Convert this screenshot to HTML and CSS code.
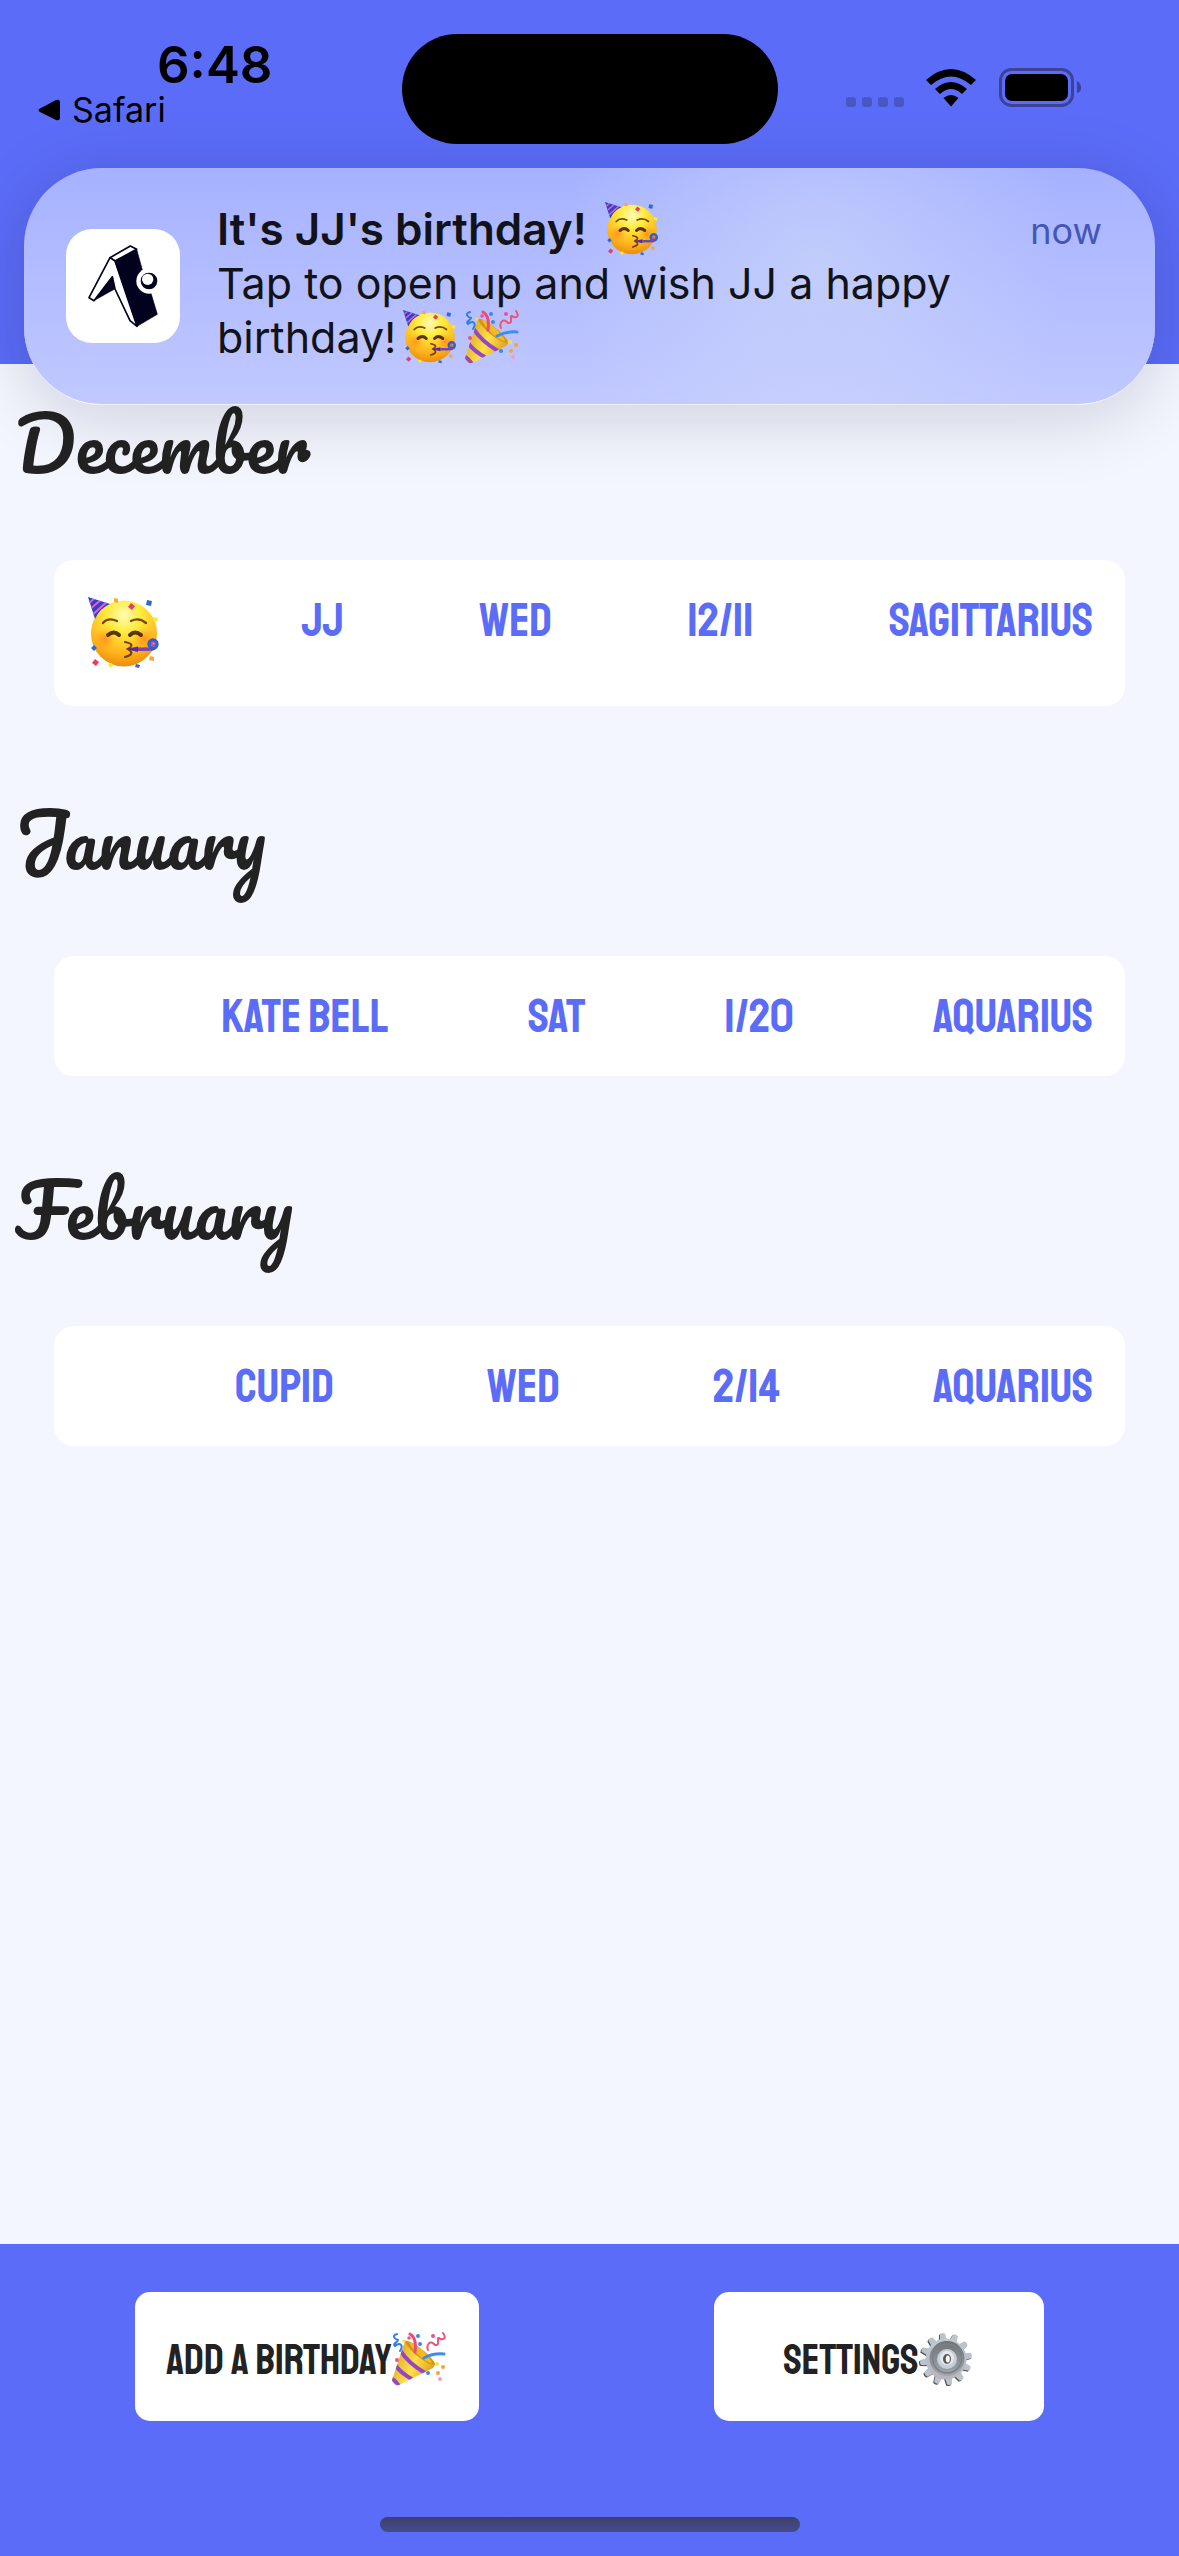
FILE: index.html
```html
<!DOCTYPE html>
<html lang="en">
<head>
<meta charset="utf-8">
<meta name="viewport" content="width=device-width, initial-scale=1">
<title>Birthdays</title>
<link rel="stylesheet" href="styles.css">
</head>
<body>
<svg class="sprite" aria-hidden="true">
  <defs>
    <radialGradient id="skin" cx="50%" cy="22%" r="80%">
      <stop offset="0" stop-color="#fffbb8"/><stop offset=".32" stop-color="#ffec3d"/><stop offset=".72" stop-color="#ffb51c"/><stop offset="1" stop-color="#e98a0b"/>
    </radialGradient>
    <radialGradient id="blush"><stop offset="0" stop-color="#ff7a1a" stop-opacity=".65"/><stop offset="1" stop-color="#ff8a1a" stop-opacity="0"/></radialGradient>
    <linearGradient id="cone" x1="0" y1=".3" x2="1" y2=".8">
      <stop offset="0" stop-color="#d9a21c"/><stop offset=".5" stop-color="#ffe04a"/><stop offset="1" stop-color="#d8920f"/>
    </linearGradient>
    <linearGradient id="steel" x1="0" y1="0" x2="0" y2="1"><stop offset="0" stop-color="#bccbd5"/><stop offset="1" stop-color="#b9b3bd"/></linearGradient>
    <linearGradient id="dish" x1="0" y1="0" x2="0" y2="1"><stop offset="0" stop-color="#6d7377"/><stop offset="1" stop-color="#a1a8ae"/></linearGradient>
    <clipPath id="coneClip"><path d="M13 9 43 32Q43 35 39 37L7 53Q1 54 0 48Z"/></clipPath>
    <clipPath id="hatClip"><path d="M0 0 22 7Q12 11 7 22Z"/></clipPath>
    <path id="tooth" d="M23 11 24.500 1.500Q27 0 29.500 1.500L31 11Z"/>
    <g id="quad"><use href="#tooth"/><use href="#tooth" transform="rotate(30 27 27)"/><use href="#tooth" transform="rotate(60 27 27)"/></g>
    <g id="cogs"><use href="#quad"/><use href="#quad" transform="rotate(90 27 27)"/><use href="#quad" transform="rotate(180 27 27)"/><use href="#quad" transform="rotate(270 27 27)"/></g>
  </defs>
  <symbol id="party-face" viewBox="0 0 72 72">
    <circle cx="36" cy="36.500" r="33" fill="url(#skin)"/>
    <circle cx="17" cy="42" r="11" fill="url(#blush)"/><circle cx="56" cy="42" r="11" fill="url(#blush)"/>
    <path d="M0 0 22 7Q12 11 7 22Z" fill="#2747c9"/>
    <g clip-path="url(#hatClip)" stroke="#f455c8" stroke-width="2" fill="none"><path d="M0 7 8 0M1 13 15 1M2 20 21 3"/></g>
    <path d="M15 26Q20 20 29 24M43 24Q51 20 58 26" fill="none" stroke="#7a4700" stroke-width="2.400" stroke-linecap="round"/>
    <path d="M20 38Q26 33 31 38M42 38Q47 33 53 38" fill="none" stroke="#5c3300" stroke-width="4" stroke-linecap="round"/>
    <path d="M37 45Q48 47 40 52Q48 57 37 60" fill="none" stroke="#7a4100" stroke-width="2.200" stroke-linecap="round"/>
    <path d="M38 52 50 49.500V55Z" fill="#4b2bb5"/>
    <path d="M50 52.300 64 52Q69 51 69 47A4 4 0 1 0 65 51" fill="none" stroke="#2c60d3" stroke-width="3.400"/>
    <path d="M50 52.300 64 52" stroke="#b52c95" stroke-width="3" stroke-dasharray="3 3"/>
    <circle cx="65.500" cy="46.500" r="1.800" fill="none" stroke="#c53c9c" stroke-width="1.400"/>
    <g fill="#2b68d8"><path d="m59 3 5 1-1 5-5-1zM6 48l3 3-3 3-3-3zM48 67l4 1-1 3-4-1z"/></g>
    <g fill="#e83e63"><path d="m43 6 4 3-3 4-4-3zM7 62l4 3-3 4-4-3z"/></g>
    <g fill="#ffa33a"><path d="m26 1 4 1v4l-4-1zM62 59l4 1v4l-5-1z"/></g>
    <g fill="#fce83c"><path d="m65 20 5 1-1 4-4-1zM20 67l4-1 1 3-3 2z"/></g>
  </symbol>
  <symbol id="popper" viewBox="0 0 54 54">
    <path d="M13 9 43 32Q43 35 39 37L7 53Q1 54 0 48Z" fill="url(#cone)"/>
    <g clip-path="url(#coneClip)" fill="none" stroke="#9446c9" stroke-width="4"><path d="M8 18Q16 31 33 41M3 33Q10 42 20 47M-1 46Q4 49 8 55"/></g>
    <path d="M13 9C19 7 42 26 43 32C37 36 14 16 13 9Z" fill="#d69412"/>
    <path d="M17 10C24 11 38 24 40 31C34 31 21 20 17 10Z" fill="#f0bb25"/>
    <g fill="none" stroke-width="3" stroke-linecap="round">
      <path d="M18 2Q25 6 23 20" stroke="#f04a70"/>
      <path d="M32 26Q41 21 52 22" stroke="#3f8cf0"/>
      <path d="M5 2C-1 4 3 7 6 8C5 11 0 12 3 14C8 10 12 13 8 19" stroke="#2f7de8" stroke-width="2"/>
      <path d="M51 1C56 8 49 8 47 6C44 5 49 14 43 13C38 7 34 13 36 18" stroke="#ee5478" stroke-width="2"/>
    </g>
    <g fill="#3f86ea"><circle cx="26" cy="4" r="2"/><circle cx="28" cy="12" r="2"/><circle cx="36" cy="41" r="2"/></g>
    <g fill="#f0508b"><circle cx="17" cy="6" r="1.800"/><circle cx="41" cy="4" r="2"/><circle cx="5" cy="28" r="2"/></g>
    <g fill="#f6a237"><circle cx="51" cy="35" r="2"/><circle cx="46" cy="41" r="2"/></g>
    <circle cx="12" cy="9" r="1.500" fill="#f8e03c"/><circle cx="45" cy="32" r="2" fill="#f8e03c"/><circle cx="48" cy="47" r="2" fill="#f09ad0"/>
  </symbol>
  <symbol id="gear" viewBox="0 0 54 54">
    <g transform="translate(-1 1) rotate(-8 27 27)"><use href="#cogs" fill="#55514f"/></g>
    <g transform="rotate(-8 27 27)"><use href="#cogs" fill="#b9c4cd"/></g>
    <circle cx="27" cy="27" r="20.500" fill="url(#steel)"/>
    <circle cx="28" cy="26.500" r="17.500" fill="url(#dish)"/>
    <circle cx="28" cy="26.500" r="14.500" fill="none" stroke="#7b8186" stroke-width="1.500"/>
    <circle cx="28" cy="27" r="10" fill="#c6cfd6"/><circle cx="28" cy="26" r="7" fill="#e2e8ec"/>
    <ellipse cx="28" cy="27" rx="4" ry="5" fill="#5f5955"/><ellipse cx="28.800" cy="27" rx="2" ry="3.500" fill="#fff"/>
  </symbol>
</svg>

<header class="topbar">
  <div class="status">
    <div class="status-left">
      <time class="clock">6:48</time>
      <a class="back" href="#">
        <svg class="back-arrow" viewBox="0 0 22 22" aria-hidden="true"><path d="M2 9.500 18 1Q22 0 22 3V19Q22 22 18 21L2 13Q-1 11 2 9.500Z"/></svg>
        Safari
      </a>
    </div>
    <div class="island"></div>
    <div class="status-right">
      <svg class="cell" viewBox="0 0 58 10" aria-label="No signal" role="img"><rect width="10" height="10" rx="3"/><rect x="16" width="10" height="10" rx="3"/><rect x="32" width="10" height="10" rx="3"/><rect x="48" width="10" height="10" rx="3"/></svg>
      <svg class="wifi" viewBox="0 0 50 38" aria-label="Wi-Fi" role="img"><path d="M0 11Q25-11 50 11L45 16Q25-1 5 16ZM9 20Q25 6 41 20L36 25Q25 15 14 25ZM17.500 29Q25 23 32.500 29L25 37.500Z"/></svg>
      <svg class="battery" viewBox="0 0 82 39" aria-label="Battery full" role="img"><rect x="1.500" y="1.500" width="72" height="36" rx="11" fill="none" stroke="#3b4297" stroke-width="3"/><rect x="6" y="6" width="63" height="27" rx="7"/><path d="M78 13Q82 15 82 19.500Q82 24 78 25Z" fill="#3b4297"/></svg>
    </div>
  </div>
</header>

<aside class="banner" aria-label="Notification">
  <svg class="app-icon" viewBox="18 27 342 342" role="img" aria-label="App icon">
    <rect x="18" y="27" width="342" height="342" rx="78" fill="#fff"/>
    <g stroke="#02021f" stroke-width="5" stroke-linejoin="round">
      <path d="M150 113 211 78 230 88 165 123Z" fill="#fff"/>
      <path d="M150 113 87 233 102 242 157 170 165 207 210 302 231 319 165 123Z" fill="#fff"/>
      <path d="M157 170 165 207 102 242Z" fill="#02021f" stroke-width="1"/>
      <path d="M165 123 230 88 247 150 273 220 292 283 231 319 226 300Z" fill="#02021f" stroke-width="2"/>
    </g>
    <circle cx="267" cy="183" r="38" fill="#fff"/><circle cx="267" cy="183" r="25" fill="#02021f"/><circle cx="263" cy="178" r="17" fill="#fff"/>
  </svg>
  <div class="banner-text">
    <div class="banner-head">
      <strong class="banner-title">It's JJ's birthday! <svg class="emoji" role="img" aria-label="Partying face"><use href="#party-face"/></svg></strong>
      <span class="banner-time">now</span>
    </div>
    <p class="banner-body">Tap to open up and wish JJ a happy<br>birthday!<svg class="emoji" role="img" aria-label="Partying face"><use href="#party-face"/></svg><svg class="emoji" role="img" aria-label="Party popper"><use href="#popper"/></svg></p>
  </div>
</aside>

<main class="months">
  <section class="month">
    <h2 class="month-name">December</h2>
    <div class="card">
      <svg class="card-emoji" role="img" aria-label="Birthday today"><use href="#party-face"/></svg>
      <span>JJ</span><span>WED</span><span>12/11</span><span>SAGITTARIUS</span>
    </div>
  </section>
  <section class="month">
    <h2 class="month-name">January</h2>
    <div class="card">
      <span></span><span>KATE BELL</span><span>SAT</span><span>1/20</span><span>AQUARIUS</span>
    </div>
  </section>
  <section class="month">
    <h2 class="month-name">February</h2>
    <div class="card">
      <span></span><span>CUPID</span><span>WED</span><span>2/14</span><span>AQUARIUS</span>
    </div>
  </section>
</main>

<footer class="bottombar">
  <div class="actions">
    <button class="action action-add" type="button">ADD A BIRTHDAY<svg class="emoji" aria-hidden="true"><use href="#popper"/></svg></button>
    <button class="action action-settings" type="button">SETTINGS<svg class="emoji" aria-hidden="true"><use href="#gear"/></svg></button>
  </div>
  <div class="home-indicator"></div>
</footer>
</body>
</html>
```
FILE: styles.css
```css
* { box-sizing: border-box; }

body {
  margin: 0;
  min-height: 100vh;
  position: relative;
  display: flex;
  flex-direction: column;
  background: #f3f6ff;
  color: #222;
  font-family: Inter, "Liberation Sans", sans-serif;
}

.sprite { position: absolute; width: 0; height: 0; }

.topbar {
  height: 364px;
  background: #5b6cf8;
  color: #000;
}

.status {
  display: grid;
  grid-template-columns: 1fr 376px 1fr;
  padding-top: 34px;
}

.status-left {
  display: flex;
  flex-direction: column;
  padding-left: 38px;
}

.clock {
  padding-left: 119px;
  font-size: 51px;
  line-height: 62px;
  font-weight: 600;
}

.back {
  display: flex;
  align-items: center;
  gap: 12px;
  color: #000;
  font-size: 34px;
  line-height: 28px;
  text-decoration: none;
}

.back-arrow { width: 22px; height: 22px; }

.island { height: 110px; border-radius: 55px; background: #000; }

.status-right {
  display: flex;
  align-items: flex-end;
  height: 73px;
  padding-left: 68px;
}

.cell { width: 58px; height: 10px; margin-right: 22px; fill: #4957c6; }
.wifi { width: 50px; height: 38px; margin-right: 23px; }
.battery { width: 82px; height: 39px; }

.banner {
  position: absolute;
  top: 168px;
  left: 24px;
  right: 24px;
  display: flex;
  align-items: center;
  gap: 37px;
  min-height: 236px;
  padding: 34px 53px 34px 42px;
  border-radius: 78px;
  background:
    radial-gradient(ellipse 22% 120% at 70% 40%, rgba(210, 222, 248, 0.5), rgba(210, 222, 248, 0)),
    linear-gradient(#a6b2ff, #c1c9ff);
  border-bottom: 1px solid #eef1ff;
  box-shadow: 0 12px 72px rgba(0, 0, 20, 0.16);
  color: #111318;
}

.app-icon { width: 114px; height: 114px; flex: none; }
.banner-text { flex: 1; padding-bottom: 6px; }
.banner-head { display: flex; justify-content: space-between; height: 54px; }
.banner-title, .banner-body { margin: 0; line-height: 54px; }
.banner-title { font-size: 44px; font-weight: 600; }
.banner-body { font-size: 43px; }
.banner-time { font-size: 36px; line-height: 58px; color: #4556b5; }

.emoji { width: 56px; height: 54px; margin-left: 6px; vertical-align: bottom; }

.months {
  flex: 1;
  display: flex;
  flex-direction: column;
  gap: 74px;
  padding: 20px 54px 74px;
}

.month-name {
  margin: 0 0 56px -39px;
  font-family: Pacifico, "Liberation Serif", cursive;
  font-weight: 400;
  font-size: 72px;
  line-height: 120px;
}

.card {
  display: flex;
  justify-content: space-between;
  padding: 24px 32px 24px 28px;
  border-radius: 20px;
  background: #fff;
  color: #5b6cf8;
  font-family: Staatliches, "Bebas Neue", "Roboto Condensed", sans-serif;
  font-weight: 400;
  font-size: 48px;
  line-height: 72px;
}

.card-emoji { width: 84px; height: 98px; padding: 0 6px; }

.bottombar {
  padding: 48px 135px 24px;
  background: #5b6cf8;
}

.actions {
  display: flex;
  justify-content: space-between;
  padding-bottom: 96px;
}

.action {
  display: flex;
  align-items: center;
  justify-content: center;
  height: 129px;
  padding: 8px 0 0;
  border: 0;
  border-radius: 15px;
  background: #fff;
  color: #222;
  font-family: Staatliches, "Bebas Neue", "Roboto Condensed", sans-serif;
  font-weight: 400;
  font-size: 42px;
}

.action .emoji { width: 54px; margin: 0 2px 4px 0; }

.action-add { width: 344px; }
.action-settings { width: 330px; }

.home-indicator {
  width: 420px;
  height: 15px;
  margin: 0 auto;
  border-radius: 8px;
  background: linear-gradient(#3d406c, #454b8c);
}
```
